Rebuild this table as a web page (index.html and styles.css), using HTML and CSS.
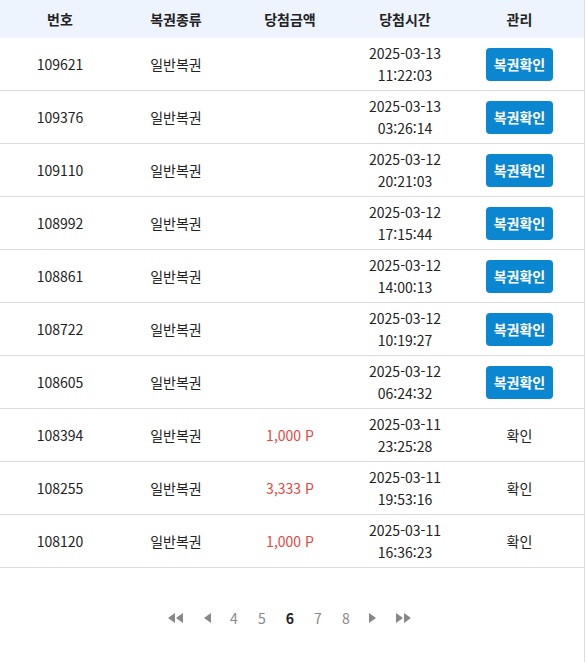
FILE: index.html
```html
<!DOCTYPE html>
<html lang="ko">
<head>
    <meta charset="UTF-8">
    <meta name="viewport" content="width=device-width, initial-scale=1.0">
    <title>복권 내역</title>
    <link rel="stylesheet" href="styles.css">
</head>
<body>
    <div class="wrap">
        <table class="lotto-table">
            <colgroup>
                <col class="c-no">
                <col class="c-type">
                <col class="c-amount">
                <col class="c-time">
                <col class="c-manage">
            </colgroup>
            <thead>
                <tr>
                    <th>번호</th>
                    <th>복권종류</th>
                    <th>당첨금액</th>
                    <th>당첨시간</th>
                    <th>관리</th>
                </tr>
            </thead>
            <tbody>
                <tr><td>109621</td><td>일반복권</td><td></td><td>2025-03-13<br>11:22:03</td><td><button type="button" class="btn-check">복권확인</button></td></tr>
                <tr><td>109376</td><td>일반복권</td><td></td><td>2025-03-13<br>03:26:14</td><td><button type="button" class="btn-check">복권확인</button></td></tr>
                <tr><td>109110</td><td>일반복권</td><td></td><td>2025-03-12<br>20:21:03</td><td><button type="button" class="btn-check">복권확인</button></td></tr>
                <tr><td>108992</td><td>일반복권</td><td></td><td>2025-03-12<br>17:15:44</td><td><button type="button" class="btn-check">복권확인</button></td></tr>
                <tr><td>108861</td><td>일반복권</td><td></td><td>2025-03-12<br>14:00:13</td><td><button type="button" class="btn-check">복권확인</button></td></tr>
                <tr><td>108722</td><td>일반복권</td><td></td><td>2025-03-12<br>10:19:27</td><td><button type="button" class="btn-check">복권확인</button></td></tr>
                <tr><td>108605</td><td>일반복권</td><td></td><td>2025-03-12<br>06:24:32</td><td><button type="button" class="btn-check">복권확인</button></td></tr>
                <tr><td>108394</td><td>일반복권</td><td class="amount">1,000 P</td><td>2025-03-11<br>23:25:28</td><td>확인</td></tr>
                <tr><td>108255</td><td>일반복권</td><td class="amount">3,333 P</td><td>2025-03-11<br>19:53:16</td><td>확인</td></tr>
                <tr><td>108120</td><td>일반복권</td><td class="amount">1,000 P</td><td>2025-03-11<br>16:36:23</td><td>확인</td></tr>
            </tbody>
        </table>

        <div class="pagination">
            <a href="#" class="arrow double first" aria-label="처음">
                <svg width="16" height="10" viewBox="0 0 16 10"><path d="M0 5 L7 0 L7 10 Z M8 5 L15 0 L15 10 Z" fill="#888"/></svg>
            </a>
            <a href="#" class="arrow" aria-label="이전">
                <svg width="8" height="10" viewBox="0 0 8 10"><path d="M0 5 L7 0 L7 10 Z" fill="#888"/></svg>
            </a>
            <a href="#" class="page">4</a>
            <a href="#" class="page">5</a>
            <a href="#" class="page current">6</a>
            <a href="#" class="page">7</a>
            <a href="#" class="page">8</a>
            <a href="#" class="arrow" aria-label="다음">
                <svg width="8" height="10" viewBox="0 0 8 10"><path d="M1 0 L8 5 L1 10 Z" fill="#888"/></svg>
            </a>
            <a href="#" class="arrow double last" aria-label="마지막">
                <svg width="16" height="10" viewBox="0 0 16 10"><path d="M1 0 L8 5 L1 10 Z M9 0 L16 5 L9 10 Z" fill="#888"/></svg>
            </a>
        </div>
    </div>
</body>
</html>
```

FILE: styles.css
```css
body {
    margin: 0;
    font-family: "Noto Sans CJK KR", "Noto Sans", sans-serif;
    background-color: #fff;
    color: #222;
}

.wrap {
    width: 584px;
    min-height: 662px;
    border-right: 1px solid #ddd;
}

.lotto-table {
    width: 584px;
    border-collapse: collapse;
    table-layout: fixed;
    font-size: 14px;
}

.c-no { width: 120px; }
.c-type { width: 112px; }
.c-amount { width: 116px; }
.c-time { width: 114px; }
.c-manage { width: 122px; }

.lotto-table th {
    height: 38px;
    padding: 0;
    background-color: #eef4fd;
    font-weight: bold;
    color: #222;
    text-align: center;
    vertical-align: middle;
}

.lotto-table td {
    height: 52px;
    padding: 0;
    border-bottom: 1px solid #dcdcdc;
    text-align: center;
    vertical-align: middle;
    line-height: 22px;
}

.lotto-table th:last-child,
.lotto-table td:last-child {
    padding-right: 7px;
}

.lotto-table .amount {
    color: #e5483f;
}

.btn-check {
    height: 33px;
    padding: 0 8px;
    border: none;
    border-radius: 4px;
    background-color: #0b86d1;
    color: #fff;
    font-family: inherit;
    font-size: 14px;
    font-weight: bold;
    cursor: pointer;
}

.pagination {
    display: flex;
    justify-content: center;
    align-items: center;
    padding-top: 39px;
    padding-right: 5px;
}

.pagination a {
    display: flex;
    justify-content: center;
    align-items: center;
    width: 28px;
    height: 22px;
    text-decoration: none;
    color: #888;
    font-size: 14px;
}

.pagination .arrow {
    width: 24px;
}

.pagination .double {
    width: 28px;
}

.pagination .first {
    margin-right: 6px;
}

.pagination .last {
    margin-left: 5px;
}

.pagination .current {
    color: #222;
    font-weight: bold;
}
```
